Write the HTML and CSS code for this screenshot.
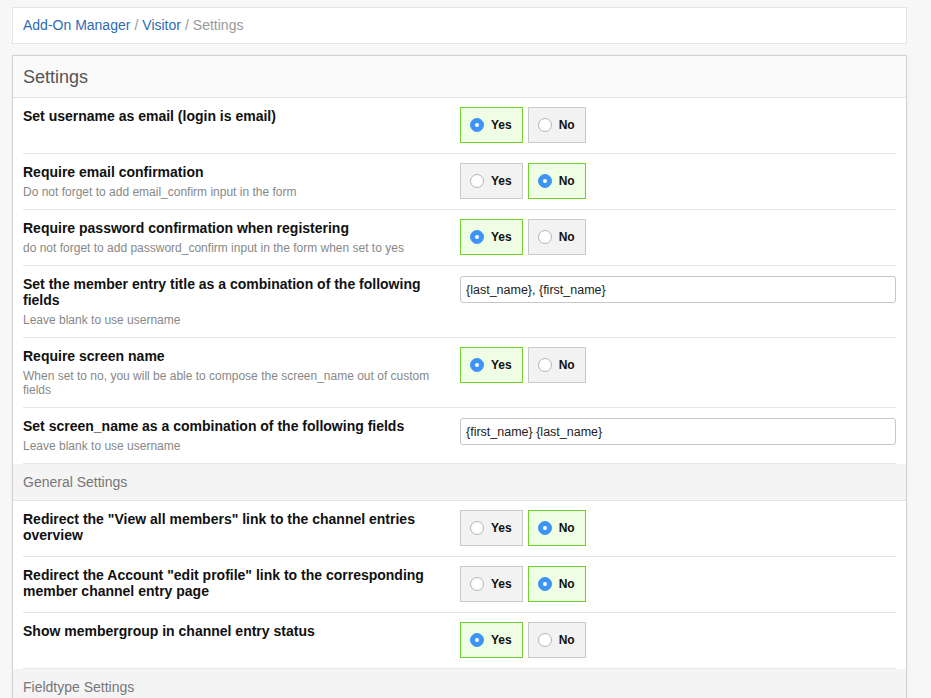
FILE: index.html
```html
<!DOCTYPE html>
<html>
<head>
<meta charset="utf-8">
<link rel="stylesheet" href="styles.css">
</head>
<body>
<div class="page">
  <div class="crumbs">
    <a class="crumb-link" href="#">Add-On Manager</a><span class="sep">/</span><a class="crumb-link" href="#">Visitor</a><span class="sep">/</span><span class="crumb-current">Settings</span>
  </div>

  <div class="panel">
    <div class="panel-title">Settings</div>

    <div class="row">
      <div class="label"><div class="label-text">Set username as email (login is email)</div></div>
      <div class="control">
        <span class="opt on"><span class="dot"></span>Yes</span>
        <span class="opt"><span class="dot"></span>No</span>
      </div>
    </div>

    <div class="row">
      <div class="label"><div class="label-text">Require email confirmation</div><div class="desc">Do not forget to add email_confirm input in the form</div></div>
      <div class="control">
        <span class="opt"><span class="dot"></span>Yes</span>
        <span class="opt on"><span class="dot"></span>No</span>
      </div>
    </div>

    <div class="row">
      <div class="label"><div class="label-text">Require password confirmation when registering</div><div class="desc">do not forget to add password_confirm input in the form when set to yes</div></div>
      <div class="control">
        <span class="opt on"><span class="dot"></span>Yes</span>
        <span class="opt"><span class="dot"></span>No</span>
      </div>
    </div>

    <div class="row">
      <div class="label"><div class="label-text">Set the member entry title as a combination of the following fields</div><div class="desc">Leave blank to use username</div></div>
      <div class="control">
        <input class="text-input" type="text" value="{last_name}, {first_name}">
      </div>
    </div>

    <div class="row">
      <div class="label"><div class="label-text">Require screen name</div><div class="desc">When set to no, you will be able to compose the screen_name out of custom fields</div></div>
      <div class="control">
        <span class="opt on"><span class="dot"></span>Yes</span>
        <span class="opt"><span class="dot"></span>No</span>
      </div>
    </div>

    <div class="row">
      <div class="label"><div class="label-text">Set screen_name as a combination of the following fields</div><div class="desc">Leave blank to use username</div></div>
      <div class="control">
        <input class="text-input" type="text" value="{first_name} {last_name}">
      </div>
    </div>

    <div class="section">General Settings</div>

    <div class="row">
      <div class="label"><div class="label-text">Redirect the "View all members" link to the channel entries overview</div></div>
      <div class="control">
        <span class="opt"><span class="dot"></span>Yes</span>
        <span class="opt on"><span class="dot"></span>No</span>
      </div>
    </div>

    <div class="row">
      <div class="label"><div class="label-text">Redirect the Account "edit profile" link to the corresponding member channel entry page</div></div>
      <div class="control">
        <span class="opt"><span class="dot"></span>Yes</span>
        <span class="opt on"><span class="dot"></span>No</span>
      </div>
    </div>

    <div class="row">
      <div class="label"><div class="label-text">Show membergroup in channel entry status</div></div>
      <div class="control">
        <span class="opt on"><span class="dot"></span>Yes</span>
        <span class="opt"><span class="dot"></span>No</span>
      </div>
    </div>

    <div class="section">Fieldtype Settings</div>
  </div>
</div>
</body>
</html>
```

FILE: styles.css
```css
html, body {
  margin: 0;
  padding: 0;
  background: #f7f7f7;
  font-family: "Liberation Sans", Arial, Helvetica, sans-serif;
  color: #111;
}

.page {
  padding: 7px 24px 0 12px;
  width: 895px;
}

.crumbs {
  height: 35px;
  line-height: 35px;
  padding: 0 10px;
  background: #fff;
  border: 1px solid #e4e4e4;
  font-size: 14px;
}

.crumb-link {
  color: #2d6cb5;
  text-decoration: none;
}

.sep {
  color: #999;
  padding: 0 4px;
}

.crumb-current {
  color: #9a9a9a;
}

.panel {
  margin-top: 11px;
  background: #fff;
  border: 1px solid #d2d2d2;
  box-shadow: 0 0 3px rgba(0, 0, 0, 0.06);
}

.panel-title {
  height: 39px;
  line-height: 39px;
  padding: 2px 10px 0;
  background: #fafafa;
  border-bottom: 1px solid #e2e2e2;
  font-size: 18px;
  color: #555;
}

.row {
  margin: 0 10px;
  padding: 9px 0 10px;
  border-bottom: 1px solid #e6e6e6;
  display: grid;
  grid-template-columns: 437px 1fr;
}

.label {
  padding: 1px 12px 0 0;
}

.label-text {
  font-size: 14px;
  line-height: 16px;
  font-weight: bold;
  color: #111;
}

.desc {
  margin-top: 5px;
  font-size: 12px;
  line-height: 14px;
  color: #888;
}

.control {
  display: flex;
  align-items: flex-start;
  gap: 5px;
}

.opt {
  display: flex;
  align-items: center;
  gap: 7px;
  height: 34px;
  padding: 0 10px 0 9px;
  border: 1px solid #cacaca;
  background: #f2f2f2;
  font-size: 12px;
  font-weight: bold;
  color: #111;
}

.opt.on {
  border-color: #6fd12f;
  background: #effde5;
}

.dot {
  width: 12px;
  height: 12px;
  border-radius: 50%;
  border: 1px solid #b4b4b4;
  background: #fff;
  position: relative;
}

.opt.on .dot {
  border-color: #3d94f6;
  background: #3d94f6;
}

.opt.on .dot::after {
  content: "";
  position: absolute;
  left: 4px;
  top: 4px;
  width: 4px;
  height: 4px;
  border-radius: 50%;
  background: #fff;
}

.text-input {
  box-sizing: border-box;
  width: 100%;
  height: 27px;
  margin-top: 1px;
  padding: 0 5px;
  border: 1px solid #c6c6c6;
  border-radius: 3px;
  background: #fff;
  font-family: "Liberation Sans", Arial, sans-serif;
  font-size: 12.5px;
  color: #222;
  outline: none;
}

.section {
  height: 36px;
  line-height: 36px;
  padding: 0 10px;
  background: #f4f4f4;
  border-bottom: 1px solid #e2e2e2;
  font-size: 14px;
  color: #777;
}
```
